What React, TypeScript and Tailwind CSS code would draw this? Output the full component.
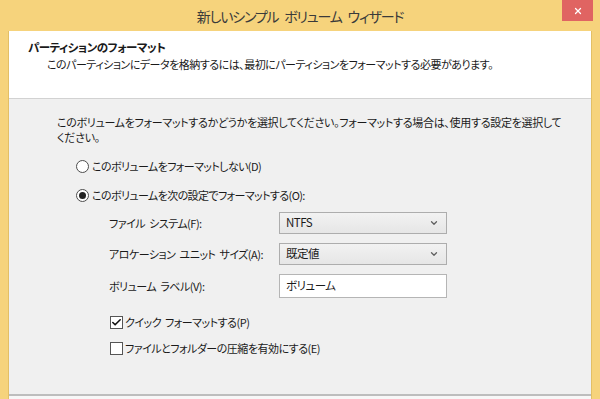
import { Check, ChevronDown, X } from 'lucide-react';

const jp = "font-['Segoe_UI','Noto_Sans_CJK_JP',sans-serif] [font-feature-settings:'palt']";

function Radio({ checked, label }: { checked?: boolean; label: string }) {
  return (
    <div className="flex h-[16px] items-center">
      <span className="flex h-[13px] w-[13px] items-center justify-center rounded-full border border-[#4d4d4d] bg-white">
        {checked && <span className="h-[7px] w-[7px] rounded-full bg-[#222]" />}
      </span>
      <span className="ml-[3px] text-[11px] tracking-[-0.6px]">{label}</span>
    </div>
  );
}

function Select({ value }: { value: string }) {
  return (
    <div className="flex h-[22px] w-[168px] items-center justify-between border border-[#adadad] bg-gradient-to-b from-[#f2f2f2] to-[#e6e6e6] pl-[6px] pr-[7px]">
      <span className="text-[11.5px]">{value}</span>
      <ChevronDown size={10} strokeWidth={3} className="text-[#606060]" />
    </div>
  );
}

function CheckBox({ checked, label }: { checked?: boolean; label: string }) {
  return (
    <div className="flex h-[13px] items-center">
      <span className="flex h-[13px] w-[13px] items-center justify-center border border-[#555] bg-white">
        {checked && <Check size={11} strokeWidth={3.5} className="text-[#111]" />}
      </span>
      <span className="ml-[2px]">{label}</span>
    </div>
  );
}

export default function App() {
  return (
    <div className={`flex h-[399px] w-[600px] flex-col overflow-hidden bg-[#f6d37c] text-[11px] tracking-[-0.5px] text-[#1a1a1a] [word-spacing:2px] ${jp}`}>
      <div className="relative flex h-[31px] shrink-0 items-center justify-center">
        <span className="text-[14px] leading-none tracking-[-1.2px] text-[#3a3a3a] [word-spacing:4px]">
          新しいシンプル ボリューム ウィザード
        </span>
        <div className="absolute right-[7px] top-0 flex h-[21px] w-[31px] items-center justify-center bg-[#e06462]">
          <X size={10} strokeWidth={3} className="text-white" />
        </div>
      </div>

      <div className="mx-[8px] flex min-h-0 flex-1 flex-col border-x border-[#e3bf66]">
        <div className="h-[68px] shrink-0 border-b border-[#d2d2d2] bg-white pt-[9px]">
          <div className="pl-[19px] text-[11.5px] font-bold leading-[14px]">パーティションのフォーマット</div>
          <div className="pl-[38px] pt-[3px] leading-[14px]">
            このパーティションにデータを格納するには、最初にパーティションをフォーマットする必要があります。
          </div>
        </div>

        <div className="flex h-[295px] shrink-0 flex-col bg-[#f0f0f0] pl-[48px] pr-[20px] pt-[16px]">
          <p className="leading-[15px] tracking-[-0.3px]">
            このボリュームをフォーマットするかどうかを選択してください。フォーマットする場合は、使用する設定を選択して
            <br />
            ください。
          </p>
          <div className="ml-[19px] mt-[13px]">
            <Radio label="このボリュームをフォーマットしない(D)" />
          </div>
          <div className="ml-[19px] mt-[13px]">
            <Radio checked label="このボリュームを次の設定でフォーマットする(O):" />
          </div>

          <div className="ml-[52px] mt-[9px] grid grid-cols-[170px_168px] gap-y-[9px] whitespace-nowrap">
            <div className="flex items-center">ファイル システム(F):</div>
            <Select value="NTFS" />
            <div className="flex items-center">アロケーション ユニット サイズ(A):</div>
            <Select value="既定値" />
            <div className="flex items-center">ボリューム ラベル(V):</div>
            <div className="flex h-[24px] items-center border border-[#b5b5b5] bg-white pl-[6px] text-[11.5px]">ボリューム</div>
          </div>

          <div className="ml-[53px] mt-[18px]">
            <CheckBox checked label="クイック フォーマットする(P)" />
          </div>
          <div className="ml-[53px] mt-[13px]">
            <CheckBox label="ファイルとフォルダーの圧縮を有効にする(E)" />
          </div>
        </div>

        <div className="flex-1 border-t-2 border-[#bdbdbd] bg-[#f7f7f7]" />
      </div>
    </div>
  );
}
